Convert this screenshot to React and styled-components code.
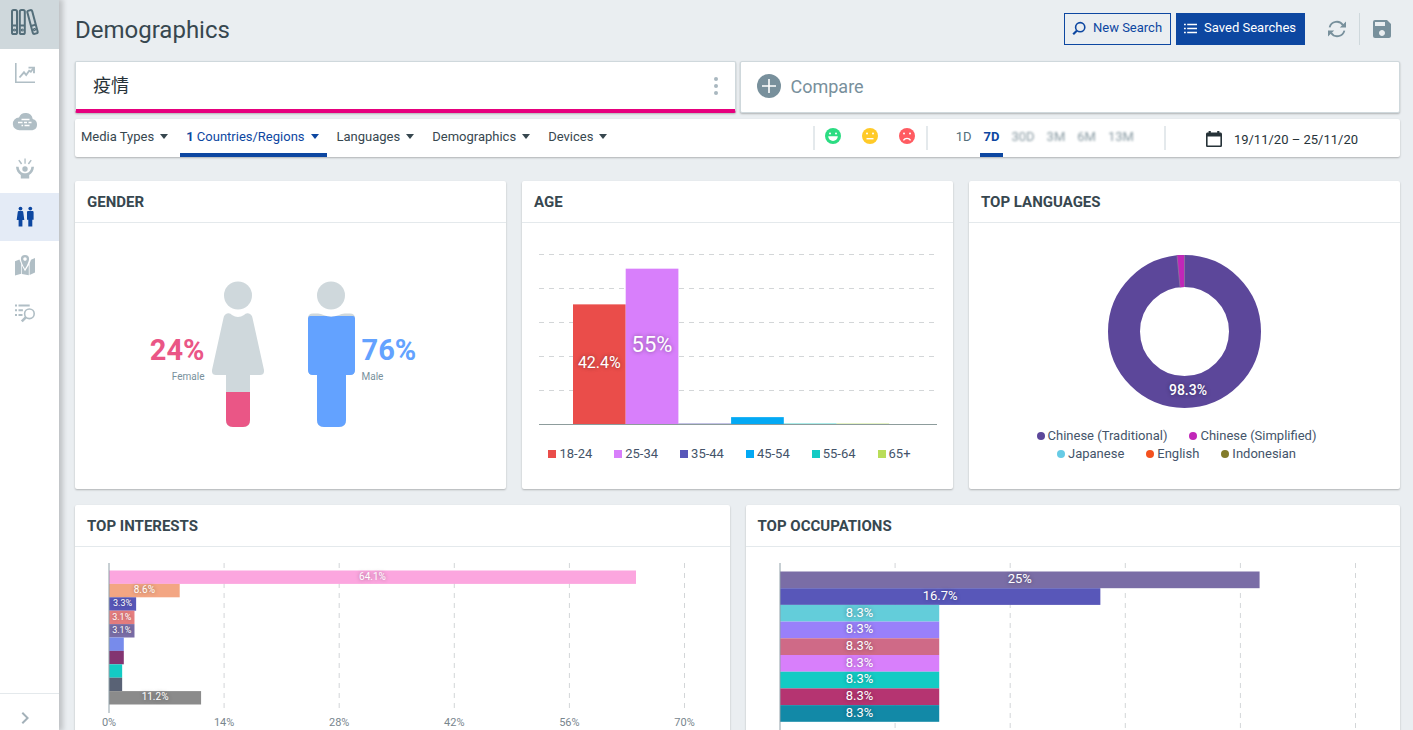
import { useId, useState } from "react";
import styled, { createGlobalStyle } from "styled-components";
import { MdChevronRight, MdSave } from "react-icons/md";

const GlobalStyle = createGlobalStyle`
  * {
    box-sizing: border-box;
  }

  body {
    margin: 0;
    background: #eaeef1;
    color: #37474f;
    font-family: Roboto, "Noto Sans CJK TC", sans-serif;
    font-size: 13px;
  }

  button {
    font: inherit;
    color: inherit;
    border: 0;
    padding: 0;
    background: none;
    cursor: pointer;
  }

  h1, h2, p, ul {
    margin: 0;
    padding: 0;
  }

  svg {
    display: block;
    flex: none;
  }
`;

const Shell = styled.div`
  display: flex;
  height: 100vh;
`;

const Sidebar = styled.nav`
  z-index: 1;
  flex: none;
  display: flex;
  flex-direction: column;
  width: 59px;
  background: #fff;
  box-shadow: 3px 0 5px 1px rgba(0, 0, 0, 0.18);
`;

const Brand = styled.a`
  display: flex;
  align-items: center;
  height: 49px;
  padding: 0 0 4px 10px;
  background: #cfd8dc;
`;

const NavLink = styled.a`
  display: flex;
  align-items: center;
  height: 48px;
  padding-left: 11px;
  color: ${(p) => (p.$active ? "#0d47a1" : "#b0bec5")};
  background: ${(p) => (p.$active ? "#e4ebf6" : "transparent")};
`;

const Expand = styled.button`
  display: flex;
  align-items: center;
  height: 37px;
  margin-top: auto;
  padding: 12px 0 0 13px;
  border-top: 1px solid #e4e9ec;
  color: #a3b1b9;
`;

const Main = styled.main`
  flex: 1;
  min-width: 0;
  padding: 0 13px 24px 16px;
  overflow-y: auto;
  scrollbar-width: none;
`;

const Header = styled.header`
  display: flex;
  align-items: center;
  height: 61px;
  padding-right: 6px;
`;

const Title = styled.h1`
  flex: 1;
  padding-bottom: 2px;
  font-size: 24px;
  font-weight: 400;
`;

const Actions = styled.div`
  display: flex;
  align-items: center;
  gap: 5px;
  height: 32px;
  margin-bottom: 3px;
`;

const Button = styled.button`
  display: flex;
  align-items: center;
  gap: 6px;
  height: 32px;
  padding: 0 8px 3px 6px;
  border: 1px solid #0d47a1;
  background: ${(p) => (p.$primary ? "#0d47a1" : "transparent")};
  color: ${(p) => (p.$primary ? "#fff" : "#0d47a1")};
`;

const IconButton = styled.button`
  display: flex;
  align-items: center;
  justify-content: center;
  color: #78909c;
`;

const Tools = styled.div`
  display: flex;
  align-items: center;
  gap: 10px;
  margin-left: 15px;

  ${IconButton} {
    width: 24px;
  }
`;

const Divider = styled.span`
  flex: none;
  width: ${(p) => p.$width || 2}px;
  height: ${(p) => p.$height || 24}px;
  background: ${(p) => p.$color || "#e4e9ec"};
`;

const Queries = styled.div`
  display: grid;
  grid-template-columns: 1fr 1fr;
  gap: 4px;
  height: 52px;
`;

const Query = styled.div`
  display: flex;
  align-items: center;
  justify-content: space-between;
  padding: 0 17px;
  background: #fff;
  border: 1px solid #cfd8dc;
  border-bottom: 4px solid #e6007e;
  border-radius: 2px;
  box-shadow: 0 1px 2px rgba(0, 0, 0, 0.25);
  color: #263238;
`;

const Term = styled.span`
  padding-bottom: 3px;
  font-size: 18px;
`;

const Compare = styled.button`
  display: flex;
  align-items: center;
  gap: 10px;
  padding: 0 16px 2px;
  background: #fff;
  border: 1px solid #cfd8dc;
  border-radius: 2px;
  box-shadow: 0 1px 2px rgba(0, 0, 0, 0.25);
  font-size: 18px;
  color: #78909c;
`;

const FilterBar = styled.div`
  display: flex;
  height: 38px;
  margin: 6px 0 24px;
  background: #fff;
  border-radius: 2px;
  box-shadow: 0 1px 2px rgba(0, 0, 0, 0.25);
`;

const Filters = styled.div`
  flex: 1;
  display: flex;
  gap: 4px;
`;

const Filter = styled.button`
  display: flex;
  align-items: center;
  gap: 6px;
  padding: 0 8px 0 6px;
  border-top: 1px solid transparent;
  border-bottom: 4px solid ${(p) => (p.$active ? "#0d47a1" : "transparent")};
  color: ${(p) => (p.$active ? "#0d47a1" : "inherit")};
  white-space: nowrap;
`;

const Group = styled.div`
  display: flex;
  align-items: center;
`;

const Moods = styled.div`
  display: flex;
  align-items: center;
  gap: 21px;
  height: 38px;
  padding: 0 11px 4px 10px;
`;

const Ranges = styled.div`
  display: flex;
  height: 38px;
  padding: 0 22px 0 24px;
`;

const Range = styled.button`
  padding: 0 4px;
  margin-right: 4px;
  border-top: 1px solid transparent;
  border-bottom: 4px solid ${(p) => (p.$active ? "#0d47a1" : "transparent")};
  color: ${(p) => (p.$active ? "#0d47a1" : "#546e7a")};
  font-weight: ${(p) => (p.$active ? 700 : 400)};
  filter: ${(p) => (p.disabled ? "blur(1px)" : "none")};
  opacity: ${(p) => (p.disabled ? 0.7 : 1)};
`;

const DateRange = styled.button`
  display: flex;
  align-items: center;
  gap: 12px;
  height: 38px;
  padding: 2px 42px 0 40px;
  color: #263238;
`;

const Row = styled.div`
  display: grid;
  grid-template-columns: repeat(${(p) => p.$columns}, 1fr);
  gap: 16px;
  margin-bottom: 16px;
`;

const Card = styled.section`
  min-height: 308px;
  background: #fff;
  border-radius: 2px;
  box-shadow: 0 1px 2px rgba(0, 0, 0, 0.25);
`;

const CardTitle = styled.h2`
  height: 42px;
  padding: 0 12px;
  border-bottom: 1px solid #e4e9ec;
  font-size: 15px;
  line-height: 42px;
  font-weight: 700;
  text-transform: uppercase;
`;

const GenderBody = styled.div`
  display: flex;
  justify-content: center;
  gap: 44px;
  padding: 58px 15px 0 0;
`;

const Person = styled.div`
  display: flex;
  flex-direction: ${(p) => (p.$reverse ? "row-reverse" : "row")};
  text-align: ${(p) => (p.$reverse ? "left" : "right")};
  gap: 7px;
`;

const Share = styled.div`
  padding-top: 52px;
`;

const SharePercent = styled.p`
  font-size: 29px;
  line-height: 34px;
  font-weight: 700;
  color: ${(p) => p.$color};
`;

const ShareLabel = styled.p`
  font-size: 10px;
  line-height: 20px;
  color: #78909c;
`;

const ChartBody = styled.div`
  padding: ${(p) => p.$padding};
`;

const Legend = styled.ul`
  display: flex;
  flex-wrap: wrap;
  justify-content: center;
  column-gap: 22px;
  padding: ${(p) => p.$padding};
  list-style: none;
  line-height: 18px;
  color: #44546a;
`;

const LegendItem = styled.li`
  display: flex;
  align-items: center;
  gap: 3px;

  &::before {
    content: "";
    width: 8px;
    height: 8px;
    border-radius: ${(p) => (p.$round ? "50%" : "0")};
    background: ${(p) => p.$color};
  }
`;

const ChartSvg = styled.svg`
  width: 100%;
  overflow: visible;
`;

const Donut = styled.svg`
  margin: 32px auto 19px;
`;

const BarLabel = styled.text`
  fill: #fff;
  text-anchor: middle;
  text-shadow: 0 0 4px rgba(0, 0, 0, 0.4);
`;

const TickLabel = styled.text`
  fill: #78868e;
  font-size: 11px;
  text-anchor: middle;
`;

const ages = [
  { name: "18-24", value: 42.4, color: "#ea4d4a", size: 16 },
  { name: "25-34", value: 55, color: "#d87ffb", size: 22 },
  { name: "35-44", value: 0.3, color: "#5857b9" },
  { name: "45-54", value: 2.6, color: "#03a9f4" },
  { name: "55-64", value: 0.3, color: "#13cbc4" },
  { name: "65+", value: 0.3, color: "#b9dd59" },
];

const languages = [
  { name: "Chinese (Traditional)", color: "#5c479a" },
  { name: "Chinese (Simplified)", color: "#c127b8" },
  { name: "Japanese", color: "#67cbe5" },
  { name: "English", color: "#f4511e" },
  { name: "Indonesian", color: "#827b2a" },
];

const interests = [
  { value: 64.1, color: "#fca6df", size: 10 },
  { value: 8.6, color: "#f3a683", size: 10 },
  { value: 3.3, color: "#5857b9", size: 9 },
  { value: 3.1, color: "#e77f80", size: 9 },
  { value: 3.1, color: "#7a6da6", size: 9 },
  { value: 1.8, color: "#778beb" },
  { value: 1.8, color: "#833471" },
  { value: 1.6, color: "#13cbc4" },
  { value: 1.6, color: "#596275" },
  { value: 11.2, color: "#8b8b8b", size: 10 },
];

const occupations = [
  { value: 25, color: "#7a6da6" },
  { value: 16.7, color: "#5857b9" },
  { value: 8.3, color: "#63cdda" },
  { value: 8.3, color: "#9980fa" },
  { value: 8.3, color: "#cf6a87" },
  { value: 8.3, color: "#d87ffb" },
  { value: 8.3, color: "#13cbc4" },
  { value: 8.3, color: "#b53471" },
  { value: 8.3, color: "#1289a7" },
].map((item) => ({ ...item, size: 13 }));

function BooksIcon() {
  return (
    <svg width="30" height="30" viewBox="0 1 30 30" fill="none" stroke="#546e7a" strokeWidth="2">
      <rect x="2" y="3" width="5" height="24" rx="1.6" />
      <rect x="9.8" y="3" width="5" height="24" rx="1.6" />
      <path d="M2 18.6h5M9.8 18.6h5" />
      <circle cx="4.5" cy="23" r="0.6" />
      <circle cx="12.3" cy="23" r="0.6" />
      <g transform="rotate(-15 22.5 15)">
        <rect x="20" y="3" width="5" height="24" rx="1.6" />
        <path d="M20 18.4h5" />
        <circle cx="22.5" cy="22.8" r="0.6" />
      </g>
    </svg>
  );
}

function TrendIcon() {
  return (
    <svg width="28" height="28" viewBox="0 0 28 28" fill="none" stroke="currentColor" strokeWidth="1.6">
      <path d="M4.8 4v19.2H24" />
      <path d="M8.5 18.5l4.5-5.2 2.2 2.7 3-4.2 1.6 1 2.6-3.5" strokeWidth="1.9" />
      <path d="M17.5 8.6H23v5.6" strokeWidth="1.9" />
    </svg>
  );
}

function CloudIcon() {
  return (
    <svg width="28" height="28" viewBox="-1 -1 28 28">
      <path
        d="M20.7 11A7.2 7.2 0 0 0 7 9.4 6.4 6.4 0 0 0 7.6 22.3h12.8A5.8 5.8 0 0 0 20.7 11z"
        fill="currentColor"
      />
      <path
        d="M9.5 11.5h8M6 14.5h4.5M12 14.5h3M16.5 14.5h3M9.5 17.5h1.6M12.5 17.5h5"
        stroke="#fff"
        strokeWidth="1.3"
        fill="none"
      />
    </svg>
  );
}

function CheerIcon() {
  return (
    <svg width="28" height="28" viewBox="0 -1 28 28" fill="currentColor">
      <path d="M13.4 2.4h1.3v5.4h-1.3zM7.2 4.6l1.2-.8 2.8 3.8-1.2.8zM20.8 4.6l-1.2-.8-2.8 3.8 1.2.8z" />
      <circle cx="14" cy="13" r="2.7" />
      <path d="M5 10.8h2.6c.2 3.2 2 5.6 4.4 6.2 1.2.3 2.8.3 4 0 2.4-.6 4.2-3 4.4-6.2H23c-.3 3.8-2 6.8-4.8 8.2v3.6H9.8V19C7 17.6 5.3 14.6 5 10.8z" />
    </svg>
  );
}

function PeopleIcon() {
  return (
    <svg width="28" height="28" viewBox="0 0 28 28" fill="currentColor">
      <circle cx="9.5" cy="5.6" r="1.9" />
      <path d="M7.7 8h3.6c.5 0 .8.3.9.7l1.1 8.3h-1.9v6.6H7.6V17H5.7l1.1-8.3c.1-.4.4-.7.9-.7z" />
      <circle cx="19.3" cy="5.6" r="1.9" />
      <path d="M17.2 8h4.2c.7 0 1.2.5 1.2 1.2v7.6h-1.3v6.8h-4v-6.8H16V9.2c0-.7.5-1.2 1.2-1.2z" />
    </svg>
  );
}

function MapIcon() {
  return (
    <svg width="28" height="28" viewBox="0 0 28 28" fill="currentColor">
      <path d="M4 10.3l4.4-1.9 1.8 4.4v10L4 24.6zM18.6 12.6L20 8.7 24 7v14.6L18.6 24z" />
      <path d="M10.9 14.6l3.1 5.6 3.8-6.2v10.2L10.9 23z" />
      <path
        d="M14 3.9A4.1 4.1 0 0 0 9.9 8c0 3 4.1 10 4.1 10s4.1-7 4.1-10A4.1 4.1 0 0 0 14 3.9zm0 2.4a1.8 1.8 0 1 1 0 3.6 1.8 1.8 0 0 1 0-3.6z"
        fillRule="evenodd"
      />
    </svg>
  );
}

function ListSearchIcon() {
  return (
    <svg width="28" height="28" viewBox="0 -1 28 28" fill="none" stroke="currentColor">
      <path d="M4 5.4h2M7.5 5.4h11.2M4 10.2h2M7.5 10.2h4.4M4 15.1h2M7.5 15.1h4" strokeWidth="2" />
      <circle cx="18.4" cy="13.8" r="4.8" strokeWidth="1.6" />
      <path d="M15 17.2l-4.2 4.2" strokeWidth="2.6" />
    </svg>
  );
}

function SearchIcon() {
  return (
    <svg width="16" height="16" viewBox="0 0 16 16" fill="none" stroke="currentColor">
      <circle cx="9.2" cy="7.2" r="4.6" strokeWidth="1.6" />
      <path d="M5.8 10.8l-3.6 3.4" strokeWidth="2.2" />
    </svg>
  );
}

function ListIcon() {
  return (
    <svg width="15" height="16" viewBox="0 0 15 16" fill="none" stroke="currentColor" strokeWidth="1.5">
      <path d="M1 4.5h1.8M1 8.5h1.8M1 12.5h1.8M4.2 4.5H14M4.2 8.5H14M4.2 12.5H14" />
    </svg>
  );
}

function RefreshIcon() {
  return (
    <svg width="18" height="18" viewBox="0 0 18 18" fill="none" stroke="currentColor" strokeWidth="1.8">
      <path d="M1.6 7.4A7.4 7.4 0 0 1 15 5.2M16.4 10.6A7.4 7.4 0 0 1 3 12.8" />
      <path d="M18 1.4v6.2h-6.2zM0 16.6v-6.2h6.2z" fill="currentColor" stroke="none" />
    </svg>
  );
}

function DotsIcon() {
  return (
    <svg width="4" height="20" viewBox="0 0 4 20" fill="#a9b8c0">
      <circle cx="2" cy="3" r="2" />
      <circle cx="2" cy="10" r="2" />
      <circle cx="2" cy="17" r="2" />
    </svg>
  );
}

function PlusIcon() {
  return (
    <svg width="24" height="24" viewBox="0 0 24 24">
      <circle cx="12" cy="12" r="12" fill="#78909c" />
      <path d="M12 5v14M5 12h14" stroke="#fff" strokeWidth="1.6" />
    </svg>
  );
}

function CaretIcon() {
  return (
    <svg width="8" height="5" viewBox="0 0 8 5" fill="currentColor">
      <path d="M0 0h8L4 5z" />
    </svg>
  );
}

function CalendarIcon() {
  return (
    <svg width="16" height="16" viewBox="0 0 16 16" fill="#263238">
      <path
        d="M1.6 1.6h1V0h2.2v1.6h6.4V0h2.2v1.6h1c.9 0 1.6.7 1.6 1.6v11.2c0 .9-.7 1.6-1.6 1.6H1.6C.7 16 0 15.3 0 14.4V3.2c0-.9.7-1.6 1.6-1.6zM1.6 5.6v8.8h12.8V5.6z"
        fillRule="evenodd"
      />
    </svg>
  );
}

const faces = {
  Positive: {
    color: "#2bdc82",
    mouth: <path d="M3.2 8.2h9.6a4.8 4.8 0 0 1-9.6 0z" fill="#fff" />,
  },
  Neutral: {
    color: "#ffca28",
    mouth: <path d="M4.5 10.7h7" stroke="#fff" strokeWidth="1.4" />,
  },
  Negative: {
    color: "#ff5b61",
    mouth: <path d="M4.4 12.4a4.2 4.2 0 0 1 7.2 0" stroke="#fff" strokeWidth="1.4" fill="none" />,
  },
};

function Face({ mood }) {
  const { color, mouth } = faces[mood];
  return (
    <svg width="16" height="16" viewBox="0 0 16 16">
      <circle cx="8" cy="8" r="8" fill={color} />
      <circle cx="5" cy="5.4" r="1" fill="#fff" />
      <circle cx="11" cy="5.4" r="1" fill="#fff" />
      {mouth}
    </svg>
  );
}

const FIGURE_HEIGHT = 146;

function Figure({ width, headX, body, percent, color }) {
  const clipId = useId();
  const filled = Math.round((FIGURE_HEIGHT * percent) / 100);
  return (
    <svg width={width} height={FIGURE_HEIGHT} viewBox={`0 0 ${width} ${FIGURE_HEIGHT}`}>
      <clipPath id={clipId}>
        <path d={body} />
      </clipPath>
      <circle cx={headX} cy="14.5" r="14" fill="#cfd8dc" />
      <path d={body} fill="#cfd8dc" />
      <g clipPath={`url(#${clipId})`}>
        <rect y={FIGURE_HEIGHT - filled} width={width} height={filled} rx="2" fill={color} />
      </g>
    </svg>
  );
}

const femaleBody =
  "M15 32.5Q18 31.5 20 34Q26 38 32 34Q34 31.5 37 32.5Q40 33.5 40.5 37L52 89Q52.5 94 48 94H38V139Q38 146 31 146H21Q14 146 14 139V94H4Q-.5 94 0 89L11.5 37Q12 33.5 15 32.5Z";
const maleBody =
  "M5 32.5H10Q13 32.5 15.5 34Q23 37.5 31 34Q33.5 32.5 36.5 32.5H42Q47 32.5 47 37.5V89Q47 94 42 94H38V139Q38 146 31 146H16Q9 146 9 139V94H5Q0 94 0 89V37.5Q0 32.5 5 32.5Z";

function GenderCard() {
  return (
    <Card>
      <CardTitle>Gender</CardTitle>
      <GenderBody>
        <Person>
          <Share>
            <SharePercent $color="#ea5686">24%</SharePercent>
            <ShareLabel>Female</ShareLabel>
          </Share>
          <Figure width={52} headX={26} body={femaleBody} percent={24} color="#ea5686" />
        </Person>
        <Person $reverse>
          <Share>
            <SharePercent $color="#63a2ff">76%</SharePercent>
            <ShareLabel>Male</ShareLabel>
          </Share>
          <Figure width={47} headX={23} body={maleBody} percent={76} color="#63a2ff" />
        </Person>
      </GenderBody>
    </Card>
  );
}

function AgeCard() {
  const base = 175.5;
  const scale = 34 / 12;
  const step = 52.7;
  return (
    <Card>
      <CardTitle>Age</CardTitle>
      <ChartBody $padding="26px 16px 16px 17px">
        <ChartSvg viewBox="0 0 398 180" role="img" aria-label="Age split">
          {[0, 1, 2, 3, 4].map((i) => (
            <line key={i} x1="0" x2="398" y1={5.5 + i * 34} y2={5.5 + i * 34} stroke="#d3d6d8" strokeDasharray="5 5" />
          ))}
          {ages.map((age, i) => (
            <rect
              key={age.name}
              x={34 + i * step}
              y={base - age.value * scale}
              width={step}
              height={age.value * scale}
              fill={age.color}
            />
          ))}
          <line x1="0" x2="398" y1={base} y2={base} stroke="#8d9c9c" />
          {ages
            .filter((age) => age.size)
            .map((age, i) => (
              <BarLabel
                key={age.name}
                x={34 + (i + 0.5) * step}
                y={base - (age.value * scale) / 2 + age.size * 0.24}
                fontSize={age.size}
              >
                {age.value}%
              </BarLabel>
            ))}
        </ChartSvg>
      </ChartBody>
      <Legend $padding="0 16px 0 0">
        {ages.map((age) => (
          <LegendItem key={age.name} $color={age.color}>
            {age.name}
          </LegendItem>
        ))}
      </Legend>
    </Card>
  );
}

function LanguagesCard() {
  return (
    <Card>
      <CardTitle>Top Languages</CardTitle>
      <Donut width="153" height="153" viewBox="0 0 153 153" role="img" aria-label="Language split">
        <g fill="none" strokeWidth="32" transform="rotate(-90 76.5 76.5)">
          <circle cx="76.5" cy="76.5" r="60.5" stroke="#5c479a" />
          <circle
            cx="76.5"
            cy="76.5"
            r="60.5"
            stroke="#c127b8"
            pathLength="100"
            strokeDasharray="1.6 98.4"
            strokeDashoffset="-98.4"
          />
        </g>
        <path d="M76.5 0v32M69 .5l3 32" stroke="#8e8a9e" strokeWidth=".6" />
        <BarLabel x="80" y="140" fontSize="14" fontWeight="500">
          98.3%
        </BarLabel>
      </Donut>
      <Legend $padding="0 66px 0 50px">
        {languages.map((language) => (
          <LegendItem key={language.name} $color={language.color} $round>
            {language.name}
          </LegendItem>
        ))}
      </Legend>
    </Card>
  );
}

function BarChart({ items, max, barHeight, height, pad, showTicks, label }) {
  const ticks = [0, 1, 2, 3, 4, 5];
  const toPercent = (value) => `${(value / max) * 100}%`;
  return (
    <ChartSvg height={height + 20} role="img" aria-label={label}>
      {ticks.slice(1).map((i) => (
        <line
          key={i}
          x1={`${i * 20}%`}
          x2={`${i * 20}%`}
          y1="0"
          y2={height - 4}
          stroke="#d3d6d8"
          strokeDasharray="5 5"
        />
      ))}
      {items.map((item, i) => (
        <rect key={i} x="0" y={pad + i * barHeight} width={toPercent(item.value)} height={barHeight} fill={item.color} />
      ))}
      <line x1="0" x2="0" y1="0" y2={height} stroke="#90a0a8" />
      {items.map(
        (item, i) =>
          item.size && (
            <BarLabel
              key={i}
              x={toPercent(item.value / 2)}
              y={pad + (i + 0.5) * barHeight + item.size * 0.25}
              fontSize={item.size}
            >
              {item.value}%
            </BarLabel>
          )
      )}
      {showTicks &&
        ticks.map((i) => (
          <TickLabel key={i} x={`${i * 20}%`} y={height + 13}>
            {(max / 5) * i}%
          </TickLabel>
        ))}
    </ChartSvg>
  );
}

const navItems = [
  { name: "Trends", Icon: TrendIcon },
  { name: "Themes", Icon: CloudIcon },
  { name: "Engagement", Icon: CheerIcon },
  { name: "Demographics", Icon: PeopleIcon },
  { name: "Map", Icon: MapIcon },
  { name: "Results", Icon: ListSearchIcon },
];

const filters = ["Media Types", "Countries/Regions", "Languages", "Demographics", "Devices"];
const ranges = ["1D", "7D", "30D", "3M", "6M", "13M"];

export default function App() {
  const [range, setRange] = useState("7D");

  return (
    <>
      <GlobalStyle />
      <Shell>
        <Sidebar>
          <Brand href="#" aria-label="Library">
            <BooksIcon />
          </Brand>
          {navItems.map(({ name, Icon }) => (
            <NavLink key={name} href={`#${name.toLowerCase()}`} aria-label={name} $active={name === "Demographics"}>
              <Icon />
            </NavLink>
          ))}
          <Expand aria-label="Expand menu">
            <MdChevronRight size={24} />
          </Expand>
        </Sidebar>
        <Main>
          <Header>
            <Title>Demographics</Title>
            <Actions>
              <Button>
                <SearchIcon />
                New Search
              </Button>
              <Button $primary>
                <ListIcon />
                Saved Searches
              </Button>
              <Tools>
                <IconButton aria-label="Refresh">
                  <RefreshIcon />
                </IconButton>
                <Divider $width={1} $height={32} $color="#cfd8dc" />
                <IconButton aria-label="Save">
                  <MdSave size={24} />
                </IconButton>
              </Tools>
            </Actions>
          </Header>
          <Queries>
            <Query>
              <Term>疫情</Term>
              <IconButton aria-label="More options">
                <DotsIcon />
              </IconButton>
            </Query>
            <Compare>
              <PlusIcon />
              Compare
            </Compare>
          </Queries>
          <FilterBar>
            <Filters>
              {filters.map((name) => (
                <Filter key={name} $active={name === "Countries/Regions"}>
                  <span>
                    {name === "Countries/Regions" && <b>1 </b>}
                    {name}
                  </span>
                  <CaretIcon />
                </Filter>
              ))}
            </Filters>
            <Group>
              <Divider />
              <Moods>
                {Object.keys(faces).map((mood) => (
                  <IconButton key={mood} aria-label={mood}>
                    <Face mood={mood} />
                  </IconButton>
                ))}
              </Moods>
              <Divider />
              <Ranges>
                {ranges.map((name, i) => (
                  <Range key={name} disabled={i > 1} $active={name === range} onClick={() => setRange(name)}>
                    {name}
                  </Range>
                ))}
              </Ranges>
              <Divider />
              <DateRange>
                <CalendarIcon />
                19/11/20 – 25/11/20
              </DateRange>
            </Group>
          </FilterBar>
          <Row $columns={3}>
            <GenderCard />
            <AgeCard />
            <LanguagesCard />
          </Row>
          <Row $columns={2}>
            <Card>
              <CardTitle>Top Interests</CardTitle>
              <ChartBody $padding="16px 45px 16px 34px">
                <BarChart
                  items={interests}
                  max={70}
                  barHeight={13.4}
                  height={150}
                  pad={7.5}
                  showTicks
                  label="Top interests"
                />
              </ChartBody>
            </Card>
            <Card>
              <CardTitle>Top Occupations</CardTitle>
              <ChartBody $padding="16px 45px 16px 34px">
                <BarChart
                  items={occupations}
                  max={30}
                  barHeight={16.7}
                  height={174}
                  pad={8.5}
                  label="Top occupations"
                />
              </ChartBody>
            </Card>
          </Row>
        </Main>
      </Shell>
    </>
  );
}
